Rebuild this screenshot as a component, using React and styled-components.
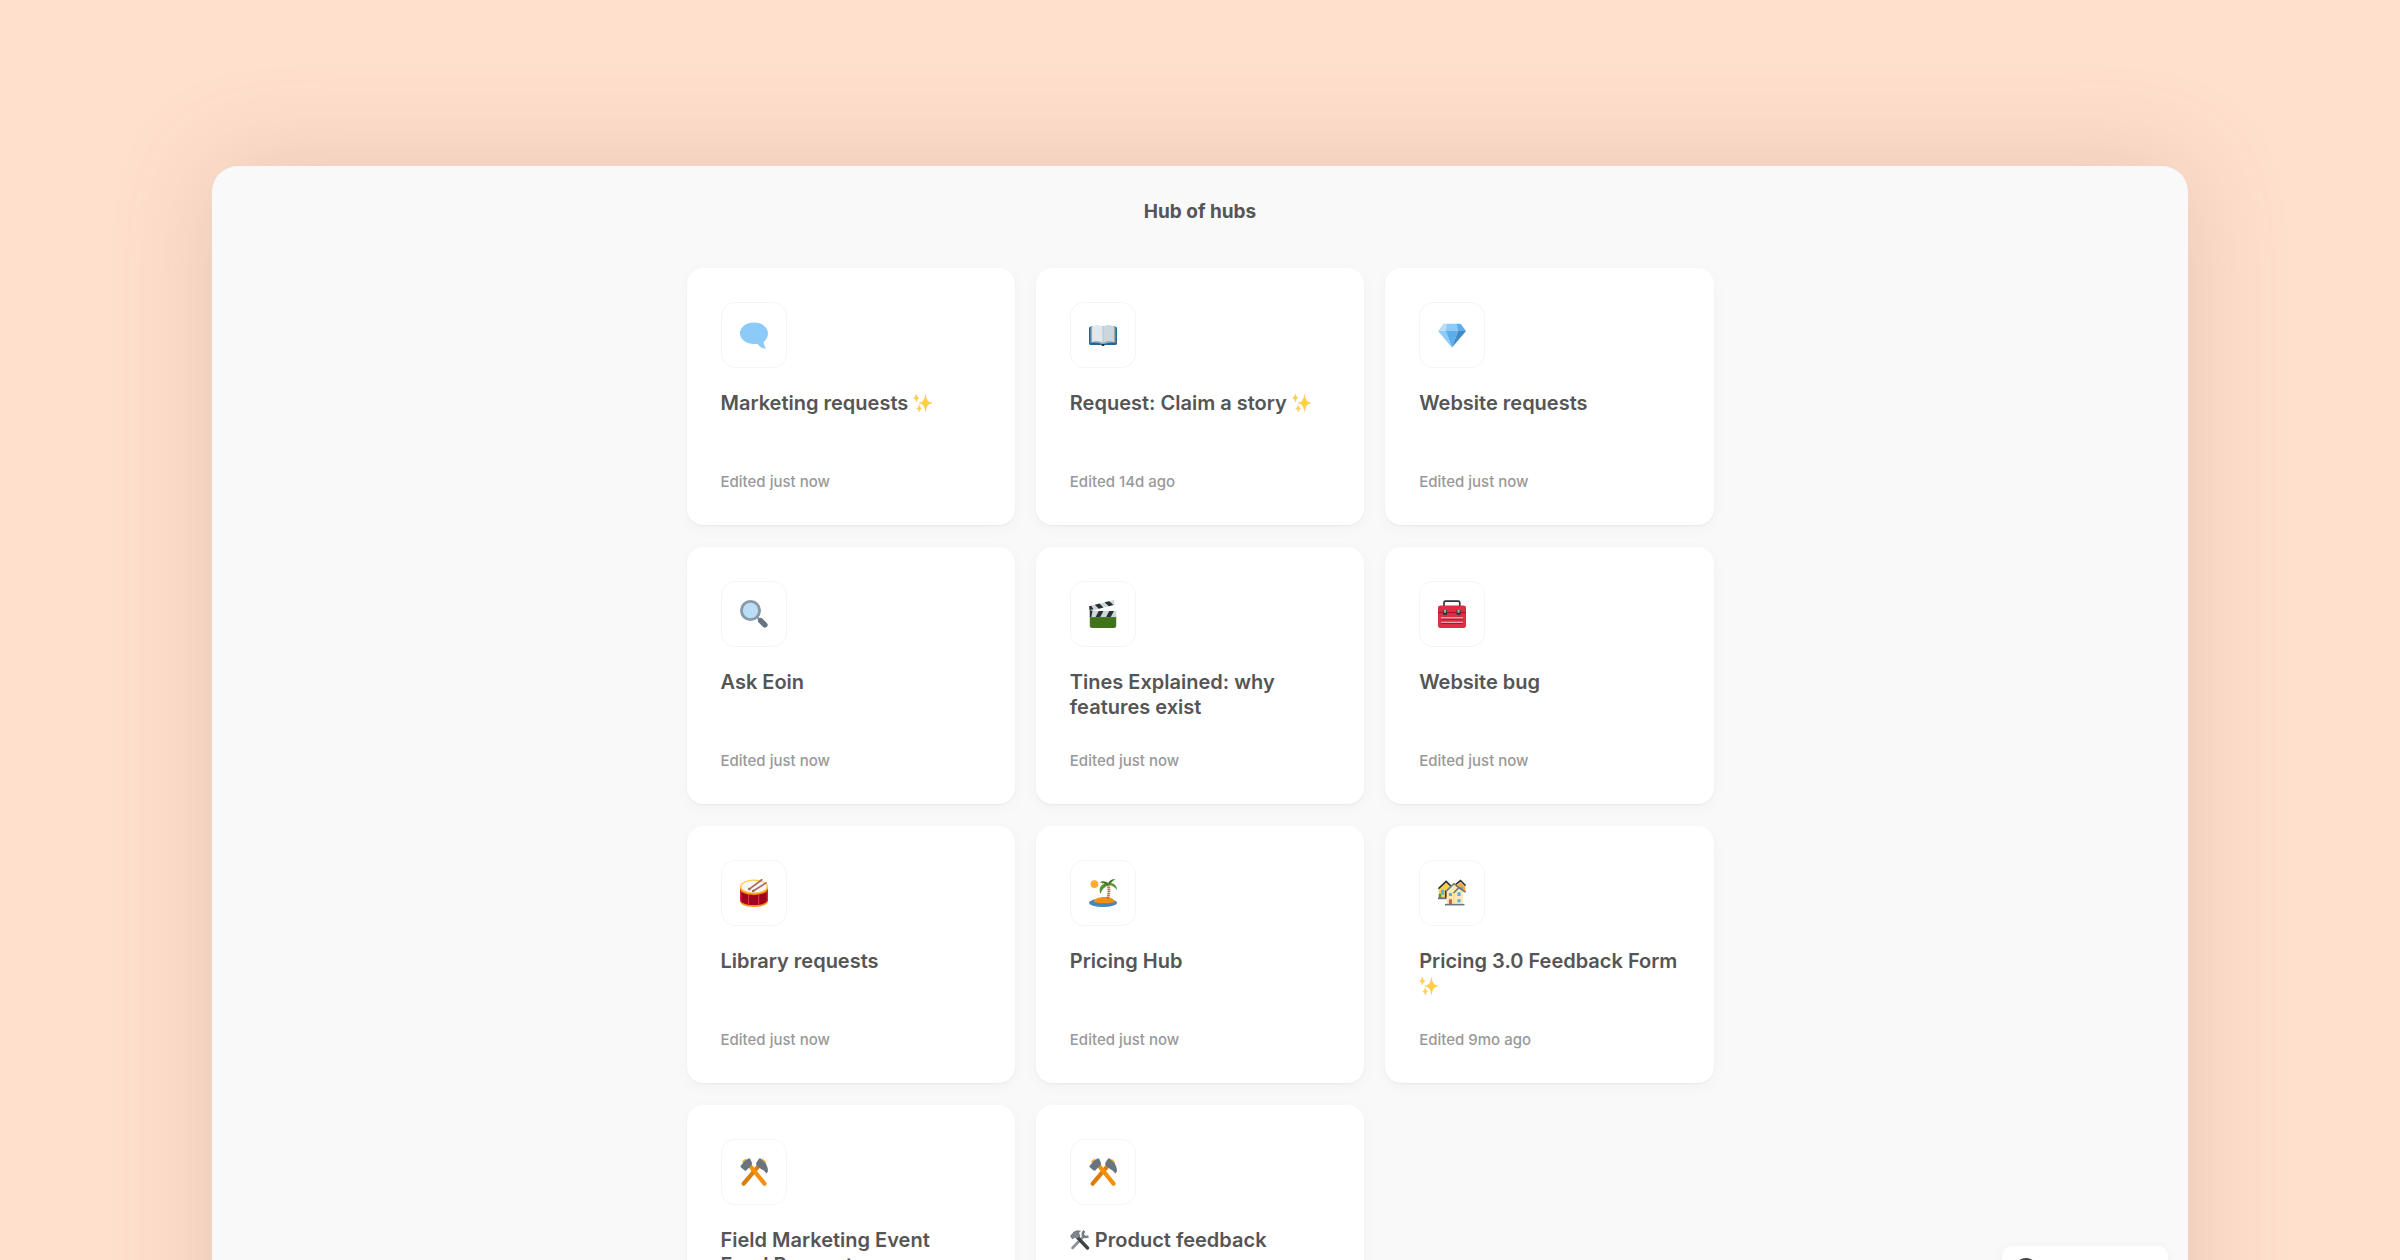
// src/App.jsx
import React from 'react';
import styled, { createGlobalStyle } from 'styled-components';

const GlobalStyle = createGlobalStyle`
  * {
    box-sizing: border-box;
  }
  html, body, #root {
    height: 100%;
  }
  body {
    margin: 0;
    overflow: hidden;
    background: #ffe0cc;
    font-family: Inter, 'Liberation Sans', sans-serif;
    color: #555;
  }
`;

const Page = styled.div`
  display: flex;
  flex-direction: column;
  align-items: center;
  min-height: 100%;
  padding-top: 166px;
`;

const Panel = styled.main`
  width: 100%;
  max-width: 1976px;
  padding: 0 32px 48px;
  border-radius: 26px;
  background: #f9f9f9;
  box-shadow: 0 0 100px rgba(150, 100, 110, 0.23);
`;

const Heading = styled.h1`
  margin: 0;
  padding: 33px 0 43px;
  font-size: 19px;
  font-weight: 700;
  line-height: 26px;
  text-align: center;
`;

const Grid = styled.div`
  display: grid;
  grid-template-columns: repeat(3, 1fr);
  gap: 22px 21px;
  width: 100%;
  max-width: 1027px;
  margin: 0 auto;
`;

const Card = styled.a`
  display: flex;
  flex-direction: column;
  min-height: 257px;
  padding: 34px;
  border-radius: 16px;
  background: #fff;
  color: inherit;
  text-decoration: none;
  box-shadow: 0 1px 2px rgba(0, 0, 0, 0.05), 0 4px 16px rgba(0, 0, 0, 0.03);
`;

const IconTile = styled.div`
  display: flex;
  align-items: center;
  justify-content: center;
  width: 66px;
  height: 66px;
  border: 1px solid #f5f5f5;
  border-radius: 14px;

  svg {
    width: 28px;
    height: 28px;
  }
`;

const Title = styled.h2`
  margin: 23px 0 0;
  font-size: 20px;
  font-weight: 600;
  line-height: 25px;

  svg {
    width: 20px;
    height: 20px;
    vertical-align: -3px;
  }
`;

const Edited = styled.p`
  margin: auto 0 0;
  font-size: 15px;
  font-weight: 500;
  line-height: 18px;
  color: #999;
`;

const Badge = styled.a`
  position: fixed;
  right: 232px;
  bottom: -34px;
  display: flex;
  align-items: center;
  width: 166px;
  height: 48px;
  padding: 0 14px;
  border-radius: 10px;
  background: #fff;
  box-shadow: 0 2px 12px rgba(0, 0, 0, 0.05);
`;

const Icon = ({ children }) => (
  <svg viewBox="0 0 36 36" aria-hidden="true">{children}</svg>
);

const SpeechIcon = () => (
  <Icon>
    <path fill="#8ccaf7" d="M18 2C8 2 0 8 0 15.700S8 29.500 18 29.500c1.500 0 3-.1 4.300-.4 2.600 3.200 6 6.400 11.200 6.400-1.700-2.400-2.900-5.200-3.200-8.600 3.500-2.500 5.700-6.600 5.700-11.200C36 8 28 2 18 2z" />
  </Icon>
);

const BookIcon = () => (
  <Icon>
    <path fill="#269" d="M2.500 7H33.500Q36 7 36 9.500V28.500Q36 31 33.500 31H20.500Q20 32 18 32T15.500 31H2.500Q0 31 0 28.500V9.500Q0 7 2.500 7z" />
    <path fill="#99aab5" d="M2 8Q10 4 18 8Q26 4 34 8V28Q26 27 18 30Q10 27 2 28z" />
    <path fill="#e1e8ed" d="M4 7Q11 3 18 7V28Q11 24 4 27z" />
    <path fill="#ccd6dd" d="M18 7Q25 3 32 7V27Q25 24 18 28z" />
    <path fill="#292f33" d="M16.500 29.500h3v2.500h-3z" />
    <path fill="none" stroke="#99aab5" strokeWidth=".6" d="M18 7v21" />
  </Icon>
);

const GemIcon = () => (
  <Icon>
    <path fill="#bdddf4" d="M7 3.500h5L10.500 13H0z" />
    <path fill="#8ccaf7" d="M11.500 3.500h13L27 13H10z" />
    <path fill="#5dadec" d="M24 3.500h5L36 13H26z" />
    <path fill="#8ccaf7" d="M0 13h10l8 21z" />
    <path fill="#5dadec" d="M10 13h16l-8 21z" />
    <path fill="#4289c1" d="M26 13h10L18 34z" />
  </Icon>
);

const SearchIcon = () => (
  <Icon>
    <path stroke="#8899a6" strokeWidth="3" d="m21 21 5 5" />
    <path stroke="#66757f" strokeWidth="7" strokeLinecap="round" d="m26.500 26.500 5.500 5.500" />
    <circle cx="13.500" cy="13.500" r="11.700" fill="#bbddf5" stroke="#8899a6" strokeWidth="3.600" />
  </Icon>
);

const ClapperIcon = () => (
  <Icon>
    <path fill="#3e721d" d="M1 21h34v12q0 3-3 3H4q-3 0-3-3z" />
    <path fill="#ccd6dd" d="M1 14h34v8H1z" />
    <path fill="#292f33" d="M0 8.500 4.500 14 3 22H1V14zM12.500 14h6l-4 8h-6zM26 14h6l-4 8h-6z" />
    <path fill="#ccd6dd" d="M0 8 32 0l1 6L2 14z" />
    <path fill="#292f33" d="M0 8l3-.7L5.500 12 2 14zM7.500 6.100l6-1.500 5 5-6 1.600zM20 3l6-1.500 5.500 5-6 1.500z" />
    <circle cx="3.500" cy="13" r="1.200" fill="#99aab5" />
  </Icon>
);

const ToolboxIcon = () => (
  <Icon>
    <path fill="none" stroke="#31373d" strokeWidth="2.200" d="M7.700 9V3.500q0-2 2-2H26q2 0 2 2V9" />
    <rect y="7" width="36" height="29" rx="3" fill="#dd2e44" />
    <path fill="#a0041e" d="M0 15.500h36v1H0z" />
    <path fill="#292f33" d="M6.500 13h5v6h-5zM24 13h5v6h-5z" />
    <path fill="#99aab5" d="M7.500 12.500h3v4h-3zM25 12.500h3v4h-3z" />
    <path fill="#e6a4b2" d="M4 22h28v2H4zM4 28h28v2H4z" />
    <path fill="#a0041e" d="M4 24h28v1H4zM4 30h28v1H4z" />
  </Icon>
);

const DrumIcon = () => (
  <Icon>
    <path fill="#f4900c" d="M0 25v3c0 5 8 8 18 8s18-3 18-8v-3z" />
    <path fill="#a0041e" d="M0 12v14c0 4.500 8 7.500 18 7.500S36 30.500 36 26V12z" />
    <path stroke="#dd2e44" strokeWidth="1.500" d="M1 15v13M11 19v14M24 19v14M35 15v13" />
    <path fill="#f4900c" d="M0 10v2.500C0 17 8 20.500 18 20.500S36 17 36 12.500V10z" />
    <ellipse cx="18" cy="9.800" rx="18" ry="9" fill="#ffcc4d" />
    <ellipse cx="18" cy="9.800" rx="16" ry="7.400" fill="#f5f8fa" />
    <path stroke="#ad6b5b" strokeWidth="2.200" strokeLinecap="round" d="M12 13 28 1M17 15.500 33.500 5" />
    <circle cx="12" cy="13" r="1.800" fill="#ad6b5b" />
    <circle cx="17" cy="15.500" r="1.800" fill="#ad6b5b" />
  </Icon>
);

const IslandIcon = () => (
  <Icon>
    <ellipse cx="18" cy="30.500" rx="18" ry="5.500" fill="#4289c1" />
    <path fill="#f4900c" d="M6 29c0-3 6-6 14-6s13 3 13 6-25 3-27 0z" />
    <path fill="none" stroke="#c1694f" strokeWidth="3.600" strokeDasharray="2 .7" d="M24 25q3-8 .5-18" />
    <circle cx="7" cy="6.500" r="5" fill="#ffac33" />
    <g fill="#5c913b">
      <path d="M26 6c-5-4-9-2-9 0 3-1 5 0 9 2zM26 5c-5-1-11 3-12 7-.7 3 0 6 1 7 1-5 5-9 11-12zM25 6c1-4 6-7 9-5-3 .5-5 3-7 7zM25 6c5-2 11 1 11 8-3-4-6-6-11-6z" />
    </g>
    <path fill="#3e721d" d="M25 7c-3-4-8-6-12-2 4-1 7 0 10 3zM25 6c0-3 4-6 8-5-4 1-5 3-6 6z" />
  </Icon>
);

const HousesIcon = () => (
  <Icon>
    <path fill="#ffcc4d" d="M1 12 10 4l9 9v11H1z" />
    <path fill="#5c913b" d="M1 19h3v5H1z" />
    <path fill="#66757f" d="M0 23.500h14V26H0z" />
    <path fill="#55acee" d="M4 14h4v6H4z" />
    <path fill="#662113" d="M9 15h3v9H9z" />
    <path fill="#ffac33" d="m22 10 7-6 6 6v7H24z" />
    <path fill="#55acee" d="M29 10h3v4h-3z" />
    <path fill="none" stroke="#292f33" strokeWidth="2" d="m.5 12.500 10-9.500 6 6M23 7l6-5 6.500 6.500" />
    <path fill="#ffe8b6" d="m11 15 9-9 12 10v17H11z" />
    <path fill="#ffd983" d="M20 16h1.500v17H20z" />
    <path fill="none" stroke="#66757f" strokeWidth="2" d="m10 16 10.500-10L28 12M20 18l7-7 8.500 6" />
    <path fill="#55acee" d="M14 18h4v4h-4zM25 17h4v5h-4zM25 26h4v4h-4z" />
    <path fill="#c1694f" d="M14 26h4v7h-4z" />
    <path fill="#66757f" d="M9 32h25v2H9z" />
  </Icon>
);

const HammerPickIcon = () => (
  <Icon>
    <path fill="#ffac33" d="m3 4 4-3 2 1-5 6zM28 1q5 1 6 7l-5-4z" />
    <path stroke="#da7d0f" strokeWidth="5.400" strokeLinecap="round" d="M4.700 33 26 8" />
    <path stroke="#f4900c" strokeWidth="5.400" strokeLinecap="round" d="M31.500 33 12 9" />
    <path fill="#66757f" d="M11 .5Q12 0 13 1l2 4q1 2 0 4l-7 7q-1 1-2 0l-5-4q-1-1 0-2L6 4z" />
    <path fill="#66757f" d="M24 1.500q1-1.500 2.500-1L30 4q6 5 6 13l-2 3q-4-5-7-6l-5-4q-2-2-1-4z" />
  </Icon>
);

const Sparkles = () => (
  <svg viewBox="0 0 20 20" role="img" aria-label="sparkles">
    <g fill="#ffd23c" stroke="#f9c067" strokeWidth=".5">
      <path d="M12.500 1.500q.7 7.800 6.500 8.500-5.800.7-6.500 8.500Q11.800 10.700 6 10q5.800-.7 6.500-8.500z" />
      <path d="M3.300 1q.4 3.600 2.700 4-2.300.4-2.700 4Q2.900 5.400.6 5q2.300-.4 2.700-4zM6.200 12q.4 3.200 2.600 3.500-2.200.3-2.600 3.500-.4-3.200-2.600-3.500 2.200-.3 2.600-3.500z" />
    </g>
  </svg>
);

const Tools = () => (
  <svg viewBox="0 0 20 20" role="img" aria-label="tools">
    <path stroke="#8b9299" strokeWidth="2.600" strokeLinecap="round" d="M2.500 18 14 6" />
    <path fill="none" stroke="#737b83" strokeWidth="2.400" d="M14.500 1q-2.500 2-1.500 4.500t5.500.8" />
    <path stroke="#3f4245" strokeWidth="3.400" strokeLinecap="round" d="m8 8 9.500 10" />
    <path fill="#7d868e" stroke="#454b50" strokeWidth=".5" d="M.5 6 4 2q3-2 6.500-1Q8 2 9 4l1 2-3 3-2-2-2.500 2z" />
  </svg>
);

const hubs = [
  { icon: SpeechIcon, title: <>Marketing requests <Sparkles /></>, edited: 'just now' },
  { icon: BookIcon, title: <>Request: Claim a story <Sparkles /></>, edited: '14d ago' },
  { icon: GemIcon, title: 'Website requests', edited: 'just now' },
  { icon: SearchIcon, title: 'Ask Eoin', edited: 'just now' },
  { icon: ClapperIcon, title: 'Tines Explained: why features exist', edited: 'just now' },
  { icon: ToolboxIcon, title: 'Website bug', edited: 'just now' },
  { icon: DrumIcon, title: 'Library requests', edited: 'just now' },
  { icon: IslandIcon, title: 'Pricing Hub', edited: 'just now' },
  { icon: HousesIcon, title: <>Pricing 3.0 Feedback Form <Sparkles /></>, edited: '9mo ago' },
  { icon: HammerPickIcon, title: 'Field Marketing Event Fund Request', edited: 'just now' },
  { icon: HammerPickIcon, title: <><Tools /> Product feedback</>, edited: 'just now' },
];

const HubCard = ({ hub }) => {
  const HubIcon = hub.icon;

  return (
    <Card href="#">
      <IconTile>
        <HubIcon />
      </IconTile>
      <Title>{hub.title}</Title>
      <Edited>Edited {hub.edited}</Edited>
    </Card>
  );
};

const App = () => (
  <>
    <GlobalStyle />
    <Page>
      <Panel>
        <Heading>Hub of hubs</Heading>
        <Grid>
          {hubs.map((hub, index) => (
            <HubCard key={index} hub={hub} />
          ))}
        </Grid>
      </Panel>
      <Badge href="#" aria-label="Tines">
        <svg width="20" height="24" viewBox="0 0 20 24" aria-hidden="true">
          <circle cx="10" cy="12" r="11" fill="none" stroke="#444" strokeWidth="2" />
        </svg>
      </Badge>
    </Page>
  </>
);

export default App;
